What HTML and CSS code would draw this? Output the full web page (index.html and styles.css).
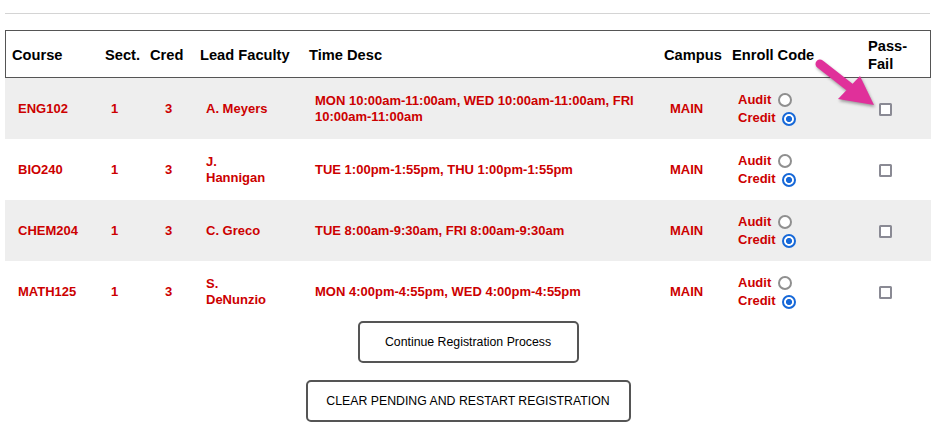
FILE: index.html
```html
<!DOCTYPE html>
<html>
<head>
<meta charset="utf-8">
<link rel="stylesheet" href="styles.css">
</head>
<body>
<div class="page">
  <div class="rule"></div>
  <div class="sched">
    <div class="row head">
      <div class="hc">Course</div>
      <div class="hc">Sect.</div>
      <div class="hc">Cred</div>
      <div class="hc">Lead Faculty</div>
      <div class="hc">Time Desc</div>
      <div class="hc">Campus</div>
      <div class="hc">Enroll Code</div>
      <div class="hc wrap">Pass-Fail</div>
    </div>

    <div class="row alt">
      <div class="bc">ENG102</div>
      <div class="bc">1</div>
      <div class="bc cred">3</div>
      <div class="bc fac">A. Meyers</div>
      <div class="bc time">MON 10:00am-11:00am, WED 10:00am-11:00am, FRI 10:00am-11:00am</div>
      <div class="bc">MAIN</div>
      <div class="bc enroll">Audit <input type="radio" name="e1"><br>Credit <input type="radio" name="e1" checked></div>
      <div class="bc pf"><input type="checkbox"></div>
    </div>

    <div class="row">
      <div class="bc">BIO240</div>
      <div class="bc">1</div>
      <div class="bc cred">3</div>
      <div class="bc fac">J. Hannigan</div>
      <div class="bc time">TUE 1:00pm-1:55pm, THU 1:00pm-1:55pm</div>
      <div class="bc">MAIN</div>
      <div class="bc enroll">Audit <input type="radio" name="e2"><br>Credit <input type="radio" name="e2" checked></div>
      <div class="bc pf"><input type="checkbox"></div>
    </div>

    <div class="row alt">
      <div class="bc">CHEM204</div>
      <div class="bc">1</div>
      <div class="bc cred">3</div>
      <div class="bc fac">C. Greco</div>
      <div class="bc time">TUE 8:00am-9:30am, FRI 8:00am-9:30am</div>
      <div class="bc">MAIN</div>
      <div class="bc enroll">Audit <input type="radio" name="e3"><br>Credit <input type="radio" name="e3" checked></div>
      <div class="bc pf"><input type="checkbox"></div>
    </div>

    <div class="row">
      <div class="bc">MATH125</div>
      <div class="bc">1</div>
      <div class="bc cred">3</div>
      <div class="bc fac">S. DeNunzio</div>
      <div class="bc time">MON 4:00pm-4:55pm, WED 4:00pm-4:55pm</div>
      <div class="bc">MAIN</div>
      <div class="bc enroll">Audit <input type="radio" name="e4"><br>Credit <input type="radio" name="e4" checked></div>
      <div class="bc pf"><input type="checkbox"></div>
    </div>
  </div>

  <div class="actions">
    <button class="btn btn-continue" type="button">Continue Registration Process</button>
    <button class="btn btn-clear" type="button">CLEAR PENDING AND RESTART REGISTRATION</button>
  </div>

  <svg class="arrow" viewBox="808 55 72 56" width="72" height="56" aria-hidden="true">
    <line x1="820" y1="64" x2="852" y2="89" stroke="#e0309a" stroke-width="9" stroke-linecap="round"/>
    <polygon points="838,99 860,76 874,105" fill="#e0309a"/>
  </svg>
</div>
</body>
</html>
```

FILE: styles.css
```css
html, body {
  margin: 0;
  padding: 0;
  background: #fff;
}

.page {
  position: relative;
  width: 936px;
  height: 431px;
  padding: 13px 5px 0 5px;
  box-sizing: border-box;
  font-family: "Liberation Sans", Arial, sans-serif;
}

.rule {
  height: 1px;
  background: #d4d4d4;
  width: 925px;
}

.sched {
  margin-top: 16px;
  width: 926px;
}

.row {
  display: grid;
  grid-template-columns: 93px 45px 50px 109px 355px 68px 136px 68px;
}

.row.head {
  border: 1px solid #555;
  height: 46px;
  color: #000;
  font-weight: bold;
  font-size: 14.67px;
}

.hc {
  align-self: center;
  padding: 3px 6px 0 6px;
  white-space: nowrap;
  line-height: 17px;
}

.hc.wrap {
  white-space: normal;
  line-height: 18px;
  padding-top: 2px;
}

.row:not(.head) {
  height: 61px;
  padding-left: 1px;
  color: #cc0000;
  font-weight: bold;
  font-size: 13px;
  line-height: 16px;
}

.row.alt {
  background: #eeeeee;
}

.bc {
  align-self: center;
  padding: 0 6px 0 12px;
}

.bc.cred {
  padding-left: 21px;
}

.bc.fac {
  padding-right: 29px;
}

.bc.time {
  padding-right: 12px;
}

.bc.enroll {
  line-height: 18px;
  white-space: nowrap;
}

.enroll input {
  appearance: none;
  -webkit-appearance: none;
  box-sizing: border-box;
  vertical-align: middle;
  margin: 0 3px 0 3px;
  width: 14px;
  height: 14px;
  border: 2px solid #8f8f8f;
  border-radius: 50%;
  background: #fff;
}

.enroll input:checked {
  border: 2px solid #1668d8;
  background: radial-gradient(circle, #1668d8 0 2.8px, #fff 3.2px);
  position: relative;
  top: 1px;
}

.bc.pf {
  line-height: 0;
  padding-top: 1px;
}

.pf input {
  appearance: none;
  -webkit-appearance: none;
  box-sizing: border-box;
  margin: 0 0 0 5px;
  width: 13px;
  height: 13px;
  border: 2px solid #8a8a94;
  border-radius: 1.5px;
  background: #fff;
}

.actions {
  margin-top: -1px;
  display: flex;
  flex-direction: column;
  align-items: center;
  gap: 17px;
}

.btn {
  box-sizing: border-box;
  height: 42px;
  background: #fff;
  border: 2px solid #555;
  border-radius: 5px;
  font-family: "Liberation Sans", Arial, sans-serif;
  font-size: 12.3px;
  color: #000;
  padding: 0;
}

.btn-continue {
  width: 221px;
}

.btn-clear {
  width: 325px;
}

.arrow {
  position: absolute;
  left: 808px;
  top: 55px;
  filter: drop-shadow(1px 2px 1.5px rgba(0, 0, 0, 0.35));
}
```
